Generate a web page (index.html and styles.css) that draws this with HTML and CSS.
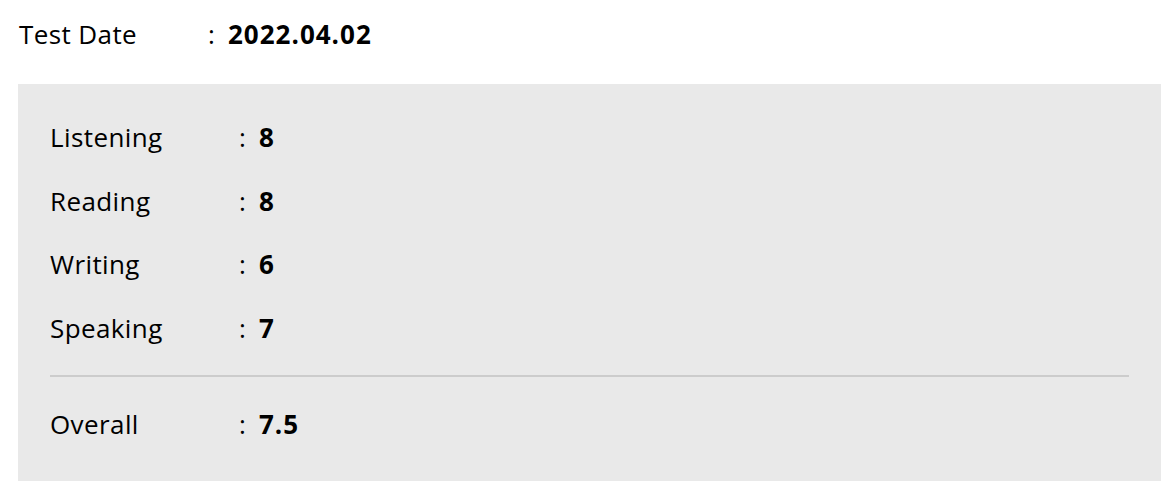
FILE: index.html
```html
<!DOCTYPE html>
<html>
<head>
<meta charset="utf-8">
<link rel="stylesheet" href="styles.css">
</head>
<body>
<div class="page">
  <div class="row head">
    <span class="label">Test Date</span><span class="colon">:</span><span class="value">2022.04.02</span>
  </div>
  <div class="box">
    <div class="scores">
      <div class="row"><span class="label">Listening</span><span class="colon">:</span><span class="value">8</span></div>
      <div class="row"><span class="label">Reading</span><span class="colon">:</span><span class="value">8</span></div>
      <div class="row"><span class="label">Writing</span><span class="colon">:</span><span class="value">6</span></div>
      <div class="row"><span class="label">Speaking</span><span class="colon">:</span><span class="value">7</span></div>
    </div>
    <hr class="divider">
    <div class="row"><span class="label">Overall</span><span class="colon">:</span><span class="value">7.5</span></div>
  </div>
</div>
</body>
</html>
```
FILE: styles.css
```css
html, body {
  margin: 0;
  padding: 0;
  background: #ffffff;
}
body {
  font-family: "Open Sans", "Noto Sans CJK KR", sans-serif;
  font-size: 26px;
  color: #000;
}
.page {
  padding: 16px 15px 0 18px;
}
.row {
  display: flex;
  align-items: center;
  line-height: 36px;
  height: 36px;
}
.label {
  width: 190px;
  padding-left: 1px;
  box-sizing: border-box;
  letter-spacing: 0.4px;
}
.colon {
  width: 20px;
}
.value {
  font-weight: 700;
  letter-spacing: 1px;
}
.head {
  margin-bottom: 32px;
}
.box {
  background: #e9e9e9;
  padding: 35px 32px 39px 31px;
}
.scores {
  display: flex;
  flex-direction: column;
  gap: 27.5px;
}
.divider {
  border: 0;
  height: 2px;
  background: #cccccc;
  margin: 29px 0 29px 1px;
}
```
